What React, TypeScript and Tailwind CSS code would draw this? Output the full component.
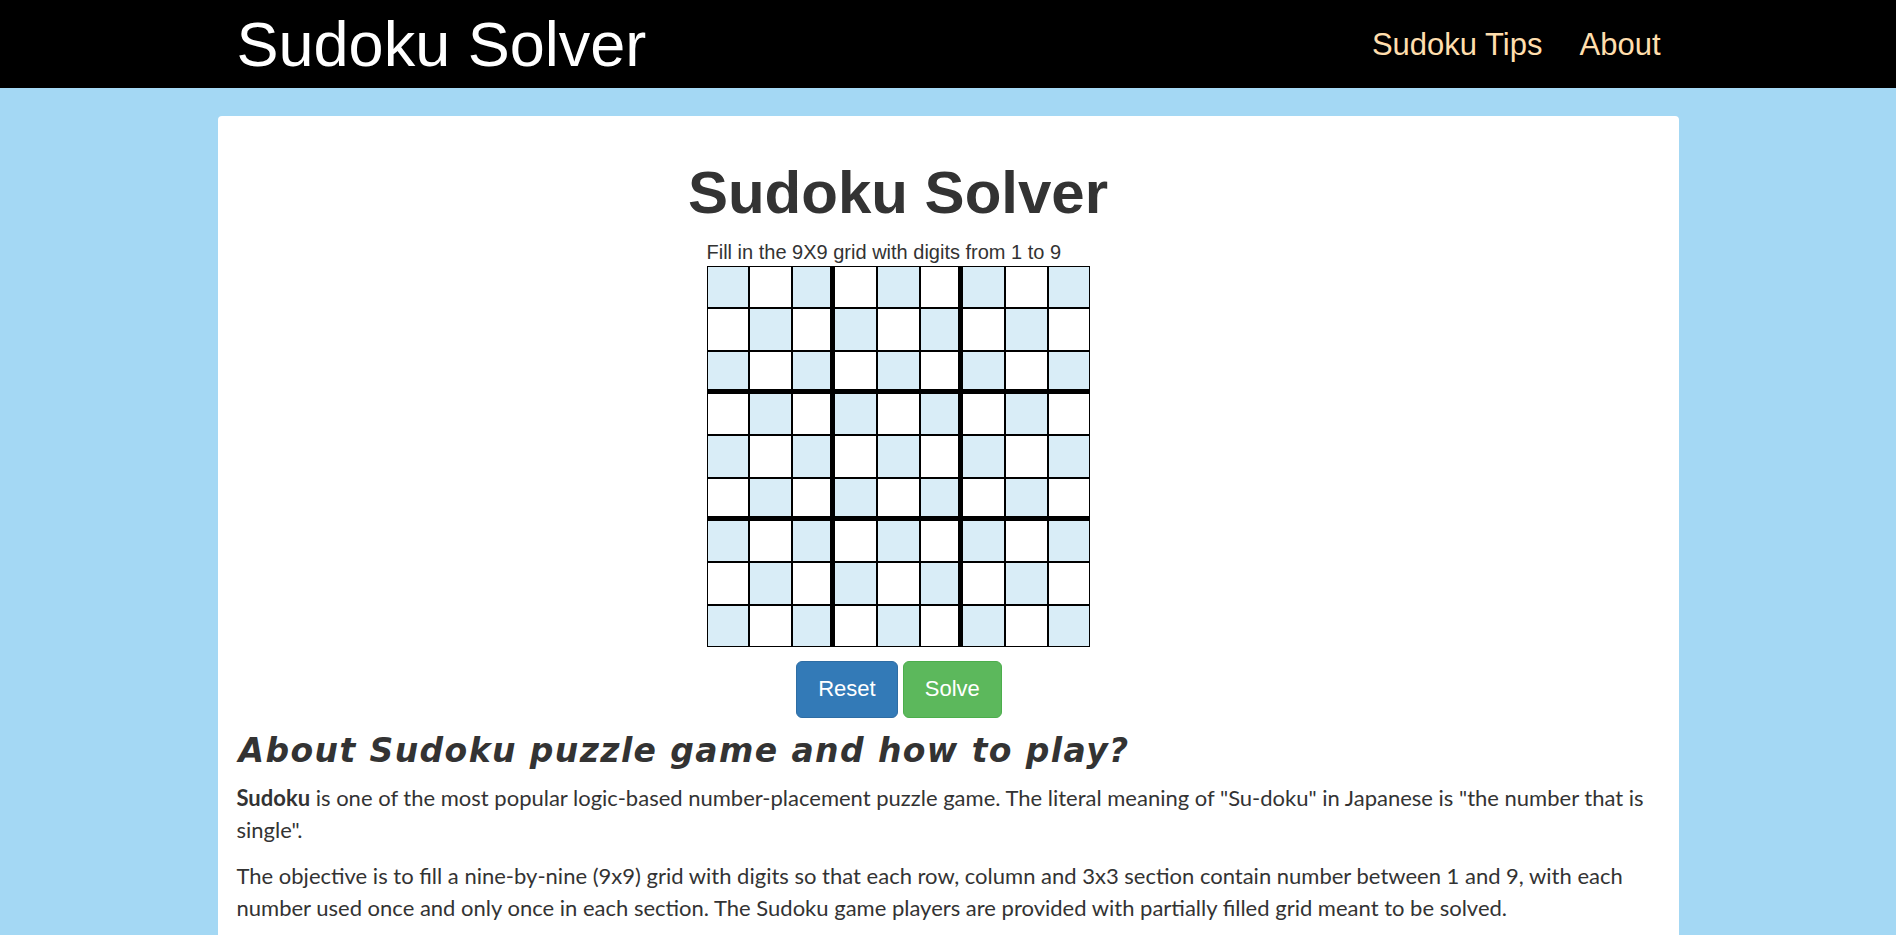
const COL_W = [
  "w-[40px]",
  "w-[41px]",
  "w-[37px]",
  "w-[41px]",
  "w-[41px]",
  "w-[37px]",
  "w-[41px]",
  "w-[41px]",
  "w-[40px]",
];
const ROW_H = [
  "h-[40px]",
  "h-[41px]",
  "h-[37px]",
  "h-[40px]",
  "h-[41px]",
  "h-[37px]",
  "h-[40px]",
  "h-[41px]",
  "h-[40px]",
];

// border on the right / bottom of each cell, thicker after every 3rd one
const rightBorder = (c: number) =>
  c === 8 ? "" : c === 2 || c === 5 ? "border-r-[5px]" : "border-r-2";
const bottomBorder = (r: number) =>
  r === 8 ? "" : r === 2 || r === 5 ? "border-b-[5px]" : "border-b-2";

const Grid = () => (
  <div className="border border-black flex flex-col">
    {ROW_H.map((h, r) => (
      <div key={r} className="flex">
        {COL_W.map((w, c) => (
          <div
            key={c}
            className={`box-content border-black ${w} ${h} ${rightBorder(c)} ${bottomBorder(r)} ${
              (r + c) % 2 === 0 ? "bg-[#d9edf7]" : "bg-white"
            }`}
          />
        ))}
      </div>
    ))}
  </div>
);

export default function App() {
  return (
    <div className="min-h-[935px] bg-[#a4d8f4] font-['Liberation_Sans',Arial,sans-serif]">
      <header className="bg-black h-[88px]">
        <div className="w-[1461px] mx-auto h-full flex items-center justify-between pl-[19px] pr-[18px]">
          <span className="text-white text-[63px] leading-[66px]">Sudoku Solver</span>
          <nav className="flex items-center gap-[37px] text-[31px] leading-[33px] text-[#ffdead]">
            <a href="#tips">Sudoku Tips</a>
            <a href="#about">About</a>
          </nav>
        </div>
      </header>

      <main className="w-[1461px] mx-auto mt-[28px] bg-white rounded-t-[4px] pl-[19px] pr-[12px] pt-[44px] pb-10 text-[#333]">
        <div className="flex flex-col items-center pr-[107px]">
          <h1 className="text-[60px] leading-[66px] font-bold">Sudoku Solver</h1>
          <div className="mt-[15px]">
            <p className="text-[20px] leading-[23px] mb-[2px]">Fill in the 9X9 grid with digits from 1 to 9</p>
            <Grid />
          </div>
          <div className="flex gap-[5px] mt-[14px] pl-[2px]">
            <button className="rounded-md border border-[#2e6da4] bg-[#337ab7] text-white text-[22px] leading-[31px] px-[21px] pt-[11px] pb-[13px]">
              Reset
            </button>
            <button className="rounded-md border border-[#4cae4c] bg-[#5cb85c] text-white text-[22px] leading-[31px] px-[21px] pt-[11px] pb-[13px]">
              Solve
            </button>
          </div>
        </div>

        <h2 className="mt-[15px] pl-[2px] font-['DejaVu_Sans',sans-serif] font-bold italic text-[33px] leading-[35px] tracking-[1.4px]">
          About Sudoku puzzle game and how to play?
        </h2>
        <div className="mt-[14px] font-['Lato',sans-serif] text-[22px] leading-[32px]">
          <p className="mb-[14px]">
            <b>Sudoku</b> is one of the most popular logic-based number-placement puzzle game. The literal meaning of
            "Su-doku" in Japanese is "the number that is single".
          </p>
          <p className="mb-[14px]">
            The objective is to fill a nine-by-nine (9x9) grid with digits so that each row, column and 3x3 section
            contain number between 1 and 9, with each number used once and only once in each section. The Sudoku game
            players are provided with partially filled grid meant to be solved.
          </p>
        </div>
      </main>
    </div>
  );
}
